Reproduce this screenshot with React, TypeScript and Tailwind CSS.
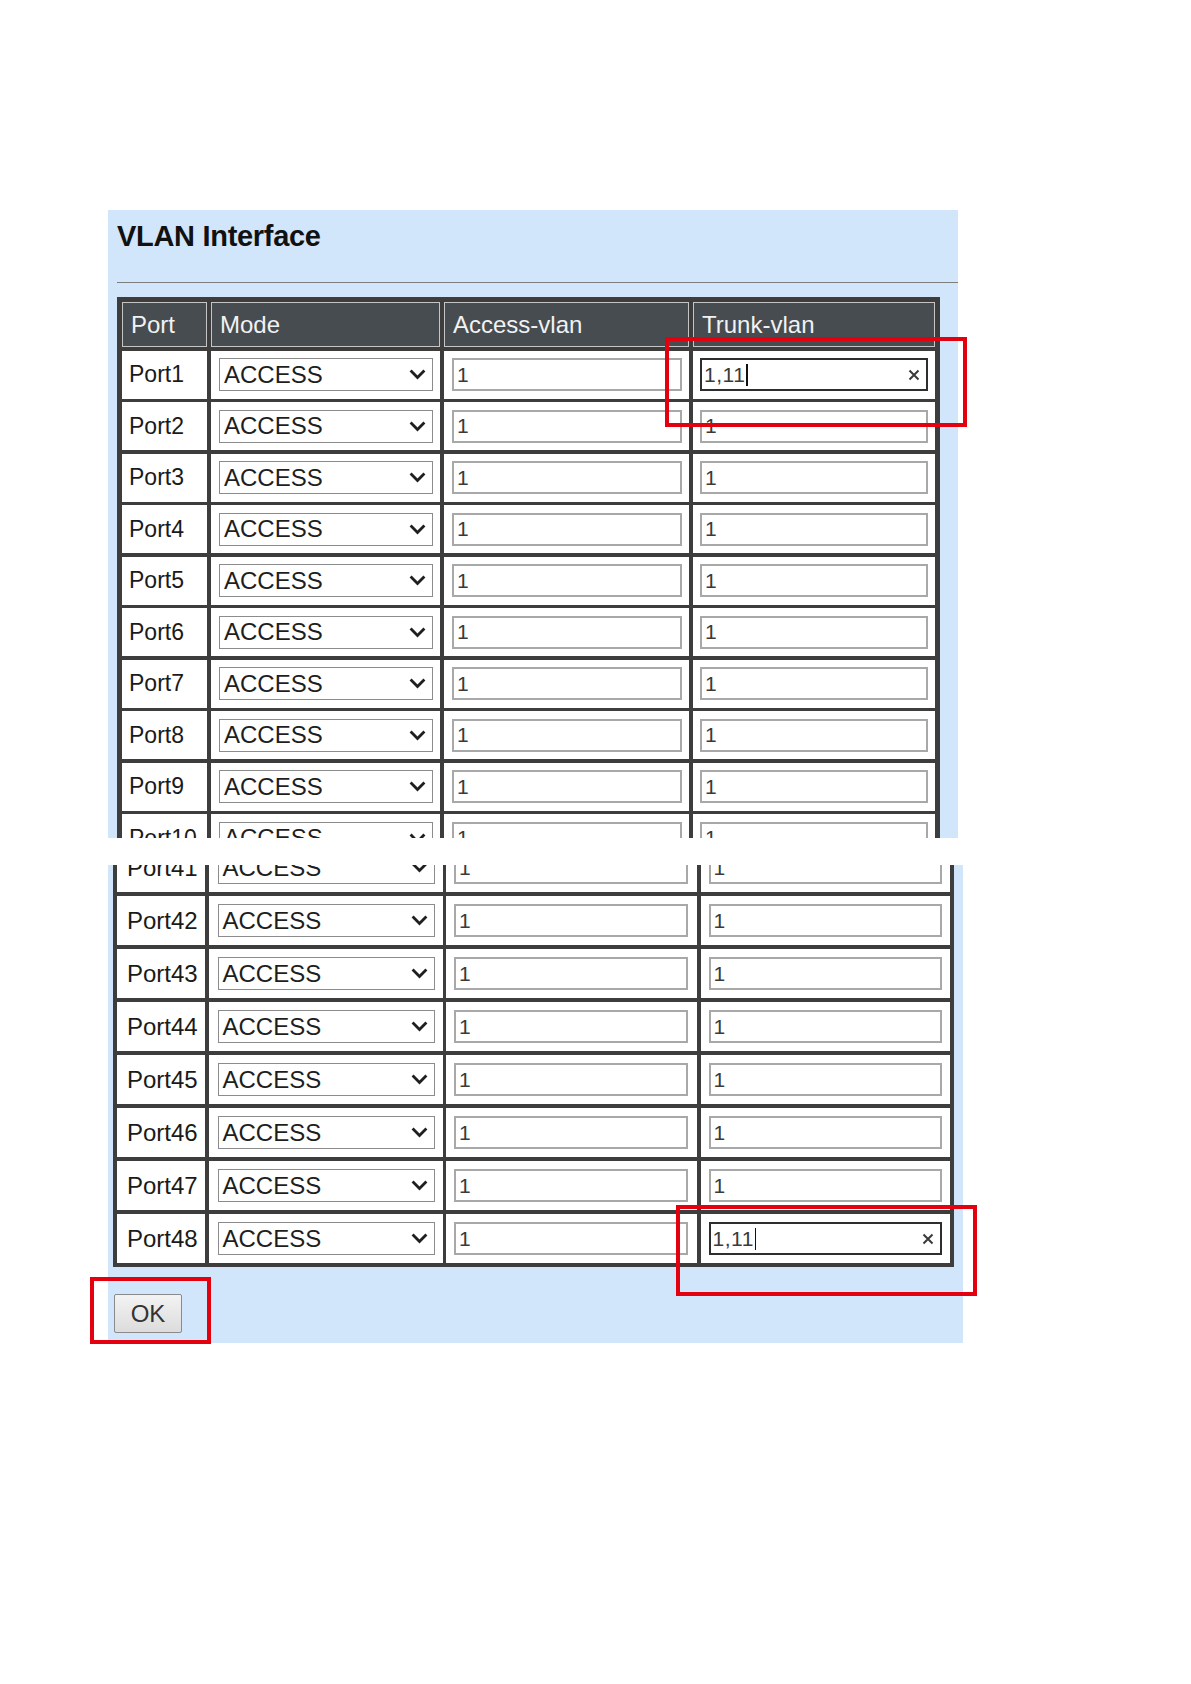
import React from "react";

type PortRow = { port: string; trunk: string; focused: boolean };

const topRows: PortRow[] = Array.from({ length: 10 }, (_, i) => ({
  port: `Port${i + 1}`,
  trunk: i === 0 ? "1,11" : "1",
  focused: i === 0,
}));

const bottomRows: PortRow[] = Array.from({ length: 8 }, (_, i) => ({
  port: `Port${41 + i}`,
  trunk: i === 7 ? "1,11" : "1",
  focused: i === 7,
}));

const headers = ["Port", "Mode", "Access-vlan", "Trunk-vlan"];

function Chevron() {
  return (
    <svg width="17" height="11" viewBox="0 0 17 11" className="shrink-0">
      <path d="M1.6 1.6 L8.5 8.6 L15.4 1.6" fill="none" stroke="#1f1f1f" strokeWidth="2.8" />
    </svg>
  );
}

function ClearX() {
  return (
    <svg width="12" height="12" viewBox="0 0 12 12" className="shrink-0">
      <path d="M1.5 1.5 L10.5 10.5 M10.5 1.5 L1.5 10.5" stroke="#3a3a3a" strokeWidth="2" />
    </svg>
  );
}

function TextBox({ value, focused }: { value: string; focused: boolean }) {
  if (focused) {
    return (
      <div className="flex h-[33px] flex-1 items-center border-2 border-[#2e2e2e] bg-white pl-[2px] pr-[6px] text-[21px] tracking-[0.5px] text-[#3a3a3a]">
        <span>{value}</span>
        <span className="ml-[1px] h-[22px] w-[1.5px] bg-[#111]" />
        <span className="flex-1" />
        <ClearX />
      </div>
    );
  }
  return (
    <div className="flex h-[33px] flex-1 items-center border-2 border-[#a8a8a8] bg-white pl-[3px] text-[21px] text-[#3a3a3a]">
      {value}
    </div>
  );
}

function BodyRow({ row, big }: { row: PortRow; big: boolean }) {
  const cell = big
    ? "flex h-[49px] items-center bg-white"
    : "flex h-[48px] items-center bg-white";
  return (
    <>
      <div className={big ? `${cell} pl-[10px] text-[24px] text-[#1a1a1a]` : `${cell} pl-[7px] text-[23px] text-[#1a1a1a]`}>
        {row.port}
      </div>
      <div className={big ? `${cell} pl-[9px] pr-[8px]` : `${cell} pl-[8px] pr-[7px]`}>
        <div className="flex h-[33px] flex-1 items-center justify-between border border-[#8c8c8c] bg-white pl-[4px] pr-[6px] text-[24px] text-[#1e1e1e]">
          ACCESS
          <Chevron />
        </div>
      </div>
      <div className={big ? `${cell} pl-[8px] pr-[9px]` : `${cell} pl-[8px] pr-[7px]`}>
        <TextBox value="1" focused={false} />
      </div>
      <div className={big ? `${cell} pl-[8px] pr-[8px]` : `${cell} pl-[7px] pr-[7px]`}>
        <TextBox value={row.trunk} focused={row.focused} />
      </div>
    </>
  );
}

export default function App() {
  return (
    <div className="relative h-[1684px] w-[1191px] bg-white pl-[108px] pt-[210px] font-['Liberation_Sans',Arial,sans-serif]">
      {/* upper capture: header and ports 1-10 */}
      <div className="h-[628px] w-[850px] overflow-hidden bg-[#d1e6fa] pl-[9px] pt-[9px]">
        <h1 className="text-[29px] font-bold leading-[34px] tracking-[-0.3px] text-[#111]">VLAN Interface</h1>
        <div className="mt-[29px] h-px bg-[#7d7d7d]" />
        <div className="mt-[14px] w-fit bg-[#3d3d3d] p-[5px]">
          <div className="grid grid-cols-[85px_229px_245px_242px] gap-x-[4px] gap-y-[3.5px]">
            {headers.map((h) => (
              <div
                key={h}
                className="flex h-[45px] items-center border border-[#c5c5c5] bg-[#474c50] pl-[8px] text-[24px] text-[#f2f2f2]"
              >
                {h}
              </div>
            ))}
            {topRows.map((r) => (
              <BodyRow key={r.port} row={r} big={false} />
            ))}
          </div>
        </div>
      </div>

      {/* lower capture: ports 41-48 and OK */}
      <div className="mt-[27px] h-[478px] w-[855px] overflow-hidden bg-[#d1e6fa] pl-[5px]">
        <div className="-mt-[26px] w-fit bg-[#3d3d3d] p-[4px]">
          <div className="grid grid-cols-[88px_234px_251px_249px] gap-x-[3.5px] gap-y-[4px]">
            {bottomRows.map((r) => (
              <BodyRow key={r.port} row={r} big={true} />
            ))}
          </div>
        </div>
        <button className="ml-[1px] mt-[27px] flex h-[39px] w-[68px] items-center justify-center rounded-[2px] border border-[#8a8a8a] bg-gradient-to-b from-[#f3f3f3] to-[#dcdcdc] text-[24px] text-[#333]">
          OK
        </button>
      </div>

      {/* red annotation boxes */}
      <div className="absolute left-[665px] top-[337px] h-[90px] w-[302px] border-4 border-[#e3000f]" />
      <div className="absolute left-[676px] top-[1205px] h-[91px] w-[301px] border-4 border-[#e3000f]" />
      <div className="absolute left-[90px] top-[1277px] h-[67px] w-[121px] border-4 border-[#e3000f]" />
    </div>
  );
}
